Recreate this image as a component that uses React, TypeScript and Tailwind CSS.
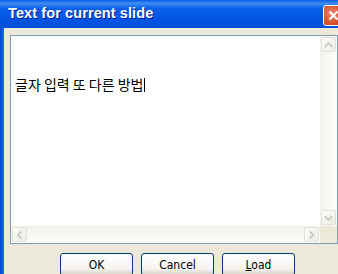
import React from "react";

function Arrow({ dir }: { dir: "up" | "down" | "left" | "right" }) {
  const paths: Record<string, string> = {
    up: "M3 9 L7 5 L11 9",
    down: "M3 5 L7 9 L11 5",
    left: "M9 3 L5 7 L9 11",
    right: "M5 3 L9 7 L5 11",
  };
  return (
    <div className="w-[15px] h-[15px] m-[1px] rounded-[2px] border border-[#E2E1DA] bg-[linear-gradient(135deg,#FBFBF8,#EDEDE6)] flex items-center justify-center">
      <svg width="14" height="14" viewBox="0 0 14 14">
        <path d={paths[dir]} fill="none" stroke="#C9C8C0" strokeWidth="2" />
      </svg>
    </div>
  );
}

export default function App() {
  return (
    <div className="w-[338px] h-[274px] overflow-hidden flex flex-col bg-[#ECE9D8]" style={{ fontFamily: '"Liberation Sans", Arial, sans-serif' }}>
      <div className="h-[28px] shrink-0 flex items-center justify-between pl-[8px] bg-[linear-gradient(180deg,#0A5CE8_0%,#3F8CF3_12%,#0860E9_30%,#0054E3_70%,#0050D8_100%)]">
        <span className="text-white font-bold text-[14.5px] tracking-[0.1px] [text-shadow:1px_1px_0_#0A1E8C]">Text for current slide</span>
        <div className="w-[21px] h-[21px] mr-[-6px] mt-[2px] rounded-[3px] border border-white bg-[radial-gradient(circle_at_40%_40%,#E98A6E,#D4532E_60%,#C2401E)] flex items-center justify-center">
          <svg width="13" height="13" viewBox="0 0 13 13">
            <path d="M2.5 2.5 L10.5 10.5 M10.5 2.5 L2.5 10.5" stroke="white" strokeWidth="2.2" />
          </svg>
        </div>
      </div>
      <div className="flex-1 flex">
        <div className="w-[4px] bg-[linear-gradient(90deg,#0046D5,#0A5FE6,#166AEE)]" />
        <div className="flex-1 flex flex-col pl-[6px] pt-[7px]">
          <div className="w-[328px] h-[209px] shrink-0 border border-[#7F9DB9] bg-white grid grid-cols-[1fr_17px] grid-rows-[1fr_17px]">
            <div className="relative pl-[4px] pt-[37px]">
              <span className="text-[14px] text-black leading-[16px]" style={{ fontFamily: '"Noto Sans CJK KR", "Liberation Sans", sans-serif' }}>
                글자 입력 또 다른 방법
              </span>
              <span className="inline-block w-[1px] h-[14px] bg-black align-[-2px] ml-[1px]" />
            </div>
            <div className="flex flex-col bg-[linear-gradient(90deg,#F3F1EC,#FEFEFB)]">
              <Arrow dir="up" />
              <div className="flex-1" />
              <Arrow dir="down" />
            </div>
            <div className="flex bg-[linear-gradient(180deg,#F3F1EC,#FEFEFB)]">
              <Arrow dir="left" />
              <div className="flex-1" />
              <Arrow dir="right" />
            </div>
            <div className="bg-[#ECE9D8]" />
          </div>
          <div className="flex gap-[8px] pl-[50px] pt-[9px]">
            {[
              ["OK", null],
              ["Cancel", null],
              ["Load", "L"],
            ].map(([label, ul]) => (
              <div
                key={label as string}
                className="w-[73px] h-[23px] shrink-0 rounded-[3px] border border-[#003C74] bg-[linear-gradient(180deg,#FFFFFF,#F5F4EF_70%,#D6D0C5)] flex items-center justify-center text-[12px] text-black"
                style={{ fontFamily: '"DejaVu Sans Condensed", "Liberation Sans", sans-serif' }}
              >
                {ul ? (
                  <span>
                    <span className="underline">{(label as string)[0]}</span>
                    {(label as string).slice(1)}
                  </span>
                ) : (
                  label
                )}
              </div>
            ))}
          </div>
        </div>
      </div>
    </div>
  );
}
